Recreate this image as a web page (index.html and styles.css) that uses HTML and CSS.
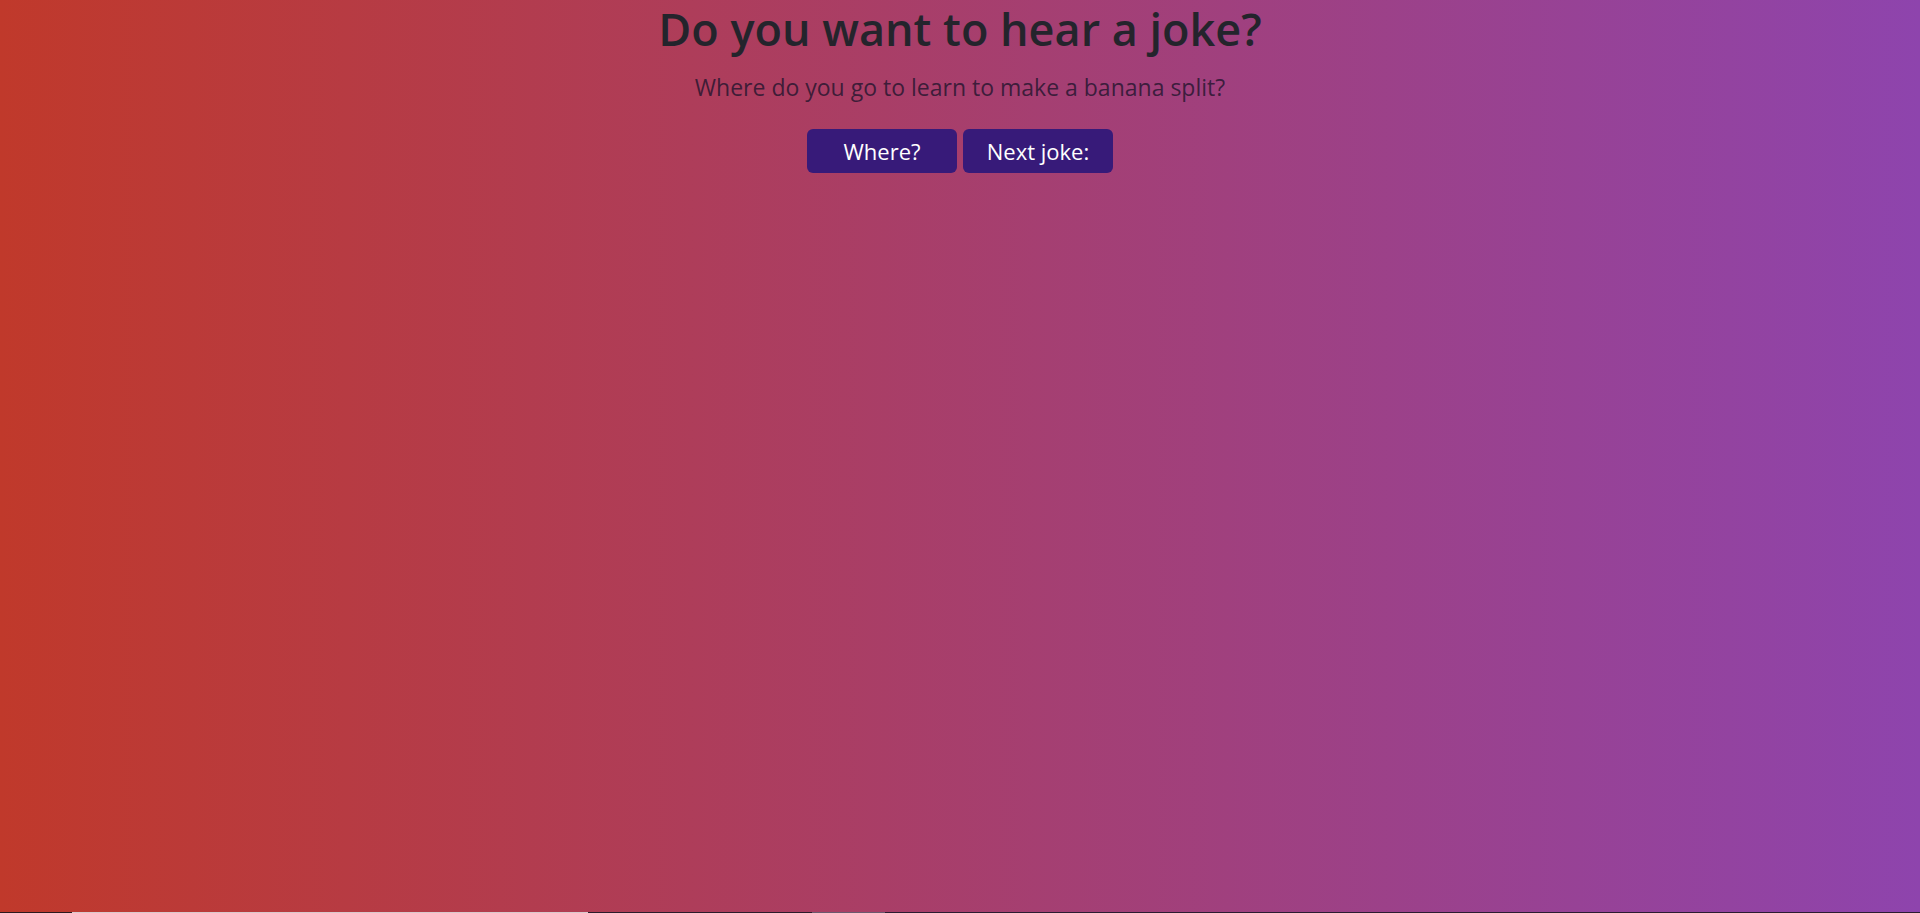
FILE: index.html
```html
<!DOCTYPE html>
<html lang="en">
<head>
<meta charset="utf-8">
<title>Joke</title>
<link rel="stylesheet" href="styles.css">
</head>
<body>
<main class="page">
  <h1 class="title">Do you want to hear a joke?</h1>
  <p class="question">Where do you go to learn to make a banana split?</p>
  <div class="actions">
    <button class="btn" type="button">Where?</button>
    <button class="btn" type="button">Next joke:</button>
  </div>
</main>
<div class="edge">
  <span class="seg seg-dark1"></span>
  <span class="seg seg-light"></span>
  <span class="seg seg-dark2"></span>
  <span class="seg seg-gray"></span>
  <span class="seg seg-dark3"></span>
</div>
</body>
</html>
```

FILE: styles.css
```css
html, body {
  margin: 0;
  height: 100%;
}
body {
  background: linear-gradient(to right, #c0392b, #8e44ad);
  font-family: "Open Sans", "Noto Sans", sans-serif;
  color: #212529;
  overflow: hidden;
}
.page {
  display: flex;
  flex-direction: column;
  align-items: center;
  text-align: center;
  padding-top: 2px;
}
.title {
  margin: 0;
  font-size: 45px;
  font-weight: 600;
  line-height: 1.2;
  color: #24242c;
}
.question {
  margin: 14px 0 0;
  font-size: 23px;
  line-height: 1.5;
  color: rgba(33, 20, 45, 0.8);
}
.actions {
  display: flex;
  gap: 6px;
  margin-top: 24px;
}
.btn {
  width: 150px;
  height: 44px;
  border: 0;
  border-radius: 6px;
  background: #371a79;
  color: #fff;
  font-family: inherit;
  font-size: 22px;
  padding: 0;
}
.edge {
  position: fixed;
  left: 0;
  right: 0;
  bottom: 0;
  height: 1px;
  display: flex;
}
.seg { display: block; height: 100%; }
.seg-dark1 { width: 72px; background: #2a1a1e; }
.seg-light { width: 516px; background: #d9c9cc; }
.seg-dark2 { width: 224px; background: #2a1c2a; }
.seg-gray { width: 73px; background: #6b5a6e; }
.seg-dark3 { flex: 1; background: #2a1c30; }
```
